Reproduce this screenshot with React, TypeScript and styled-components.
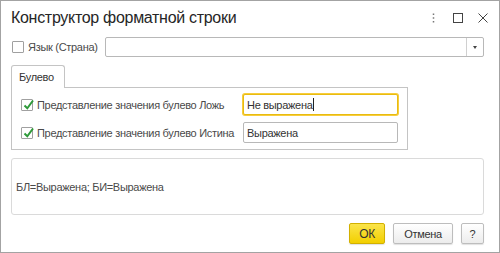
import React from 'react';
import styled, { createGlobalStyle } from 'styled-components';

const GlobalStyle = createGlobalStyle`
    html, body {
        margin: 0;
        padding: 0;
        background: #fff;
    }
    * {
        box-sizing: border-box;
    }
`;

const Window = styled.div`
    width: 500px;
    height: 253px;
    border: 1px solid #a3a3a3;
    background: #fff;
    display: flex;
    flex-direction: column;
    font-family: "Liberation Sans", Arial, sans-serif;
    font-size: 11px;
    letter-spacing: -0.3px;
    color: #4a4a4a;
`;

const Header = styled.div`
    height: 34px;
    display: flex;
    align-items: center;
    padding: 0 10px 0 10px;
`;

const Title = styled.h1`
    flex: 1;
    margin: 0;
    font-size: 16px;
    font-weight: 400;
    letter-spacing: -0.3px;
    color: #262626;
`;

const HeaderButtons = styled.div`
    display: flex;
    align-items: center;
    gap: 13px;
`;

const IconButton = styled.button`
    width: 12px;
    height: 12px;
    padding: 0;
    border: none;
    background: none;
    display: flex;
    align-items: center;
    justify-content: center;
`;

const Body = styled.div`
    flex: 1;
    display: flex;
    flex-direction: column;
    padding: 2px 15px 0 10px;
`;

const LangRow = styled.div`
    display: flex;
    align-items: center;
    height: 20px;
`;

const Check = styled.span<{ $checked?: boolean }>`
    position: relative;
    flex: none;
    width: 12px;
    height: 12px;
    border: 1px solid #a0a0a0;
    border-radius: 1px;
    background: #fff;
    margin-left: ${p => (p.$checked ? 0 : 1)}px;
`;

const CheckMark = styled.svg`
    position: absolute;
    left: 1px;
    top: -1px;
`;

const Label = styled.span`
    white-space: nowrap;
`;

const LangLabel = styled(Label)`
    margin-left: 4px;
    width: 77px;
`;

const Field = styled.div<{ $focused?: boolean }>`
    position: relative;
    height: 21px;
    border: 1px solid ${p => (p.$focused ? '#e8bc10' : '#b8b8b8')};
    border-radius: 2px;
    background: #fff;
    display: flex;
    align-items: center;
    padding: 0 3px;
    color: #333;
    box-shadow: ${p => (p.$focused ? '0 0 0 1px #f8cd3c' : 'none')};
`;

const LangField = styled(Field)`
    flex: 1;
    height: 20px;
    padding: 0;
    justify-content: flex-end;
`;

const DropButton = styled.div`
    width: 17px;
    height: 100%;
    border-left: 1px solid #d0d0d0;
    display: flex;
    align-items: center;
    justify-content: center;
`;

const Arrow = styled.span`
    width: 0;
    height: 0;
    border-left: 2.5px solid transparent;
    border-right: 2.5px solid transparent;
    border-top: 3px solid #444;
`;

const Caret = styled.span`
    width: 1px;
    height: 13px;
    background: #222;
    margin-left: 1px;
`;

const Tabs = styled.div`
    margin-top: 8px;
    display: flex;
    flex-direction: column;
    width: 397px;
`;

const Tab = styled.div`
    width: 54px;
    height: 23px;
    margin-bottom: -1px;
    border: 1px solid #c4c4c4;
    border-bottom: none;
    border-radius: 3px 3px 0 0;
    background: #fff;
    display: flex;
    align-items: center;
    padding-left: 7px;
    color: #333;
    position: relative;
    z-index: 1;
`;

const Panel = styled.div`
    height: 63px;
    border: 1px solid #c4c4c4;
    display: grid;
    grid-template-columns: 12px 202px 155px;
    column-gap: 4px;
    row-gap: 7px;
    align-items: center;
    align-content: start;
    padding: 6px 8px 0 9px;
`;

const Summary = styled.div`
    margin-top: 8px;
    height: 57px;
    border: 1px solid #dadada;
    border-radius: 3px;
    display: flex;
    align-items: center;
    padding-left: 4px;
    color: #4a4a4a;
`;

const Footer = styled.div`
    margin-top: 8px;
    display: flex;
    justify-content: flex-end;
    gap: 8px;
`;

const Button = styled.button<{ $primary?: boolean; $w: number }>`
    width: ${p => p.$w}px;
    height: 21px;
    padding: 0;
    border: 1px solid ${p => (p.$primary ? '#d2b000' : '#bdbdbd')};
    border-radius: 2px;
    background: ${p => (p.$primary ? 'linear-gradient(#fbe44a, #f2cf00)' : 'linear-gradient(#ffffff, #ececec)')};
    font-family: "Liberation Sans", Arial, sans-serif;
    font-size: ${p => (p.$primary ? 12 : 11)}px;
    letter-spacing: -0.3px;
    color: #333;
    box-shadow: 0 1px 1px rgba(0, 0, 0, 0.12);
`;

const CheckBox: React.FC<{ checked?: boolean }> = ({ checked }) => (
    <Check $checked={checked}>
        {checked && (
            <CheckMark width="12" height="12" viewBox="0 0 12 12">
                <path d="M1.5 6.5 L4.3 9.3 L10 1.5" fill="none" stroke="#2f9a3a" strokeWidth="2" />
            </CheckMark>
        )}
    </Check>
);

const App: React.FC = () => {
    return (
        <>
            <GlobalStyle />
            <Window>
                <Header>
                    <Title>Конструктор форматной строки</Title>
                    <HeaderButtons>
                        <IconButton>
                            <svg width="3" height="10" viewBox="0 0 3 10">
                                <rect x="0.75" y="0.5" width="1.5" height="1.5" fill="#777" />
                                <rect x="0.75" y="4.25" width="1.5" height="1.5" fill="#777" />
                                <rect x="0.75" y="8" width="1.5" height="1.5" fill="#777" />
                            </svg>
                        </IconButton>
                        <IconButton>
                            <svg width="10" height="10" viewBox="0 0 10 10">
                                <rect x="0.5" y="0.5" width="9" height="9" fill="none" stroke="#444" />
                            </svg>
                        </IconButton>
                        <IconButton>
                            <svg width="10" height="10" viewBox="0 0 10 10">
                                <path d="M0.5 0.5 L9.5 9.5 M9.5 0.5 L0.5 9.5" stroke="#444" strokeWidth="1" />
                            </svg>
                        </IconButton>
                    </HeaderButtons>
                </Header>
                <Body>
                    <LangRow>
                        <CheckBox />
                        <LangLabel>Язык (Страна)</LangLabel>
                        <LangField>
                            <DropButton>
                                <Arrow />
                            </DropButton>
                        </LangField>
                    </LangRow>
                    <Tabs>
                        <Tab>Булево</Tab>
                        <Panel>
                            <CheckBox checked />
                            <Label>Представление значения булево Ложь</Label>
                            <Field $focused>
                                Не выражена<Caret />
                            </Field>
                            <CheckBox checked />
                            <Label>Представление значения булево Истина</Label>
                            <Field>Выражена</Field>
                        </Panel>
                    </Tabs>
                    <Summary>БЛ=Выражена; БИ=Выражена</Summary>
                    <Footer>
                        <Button $primary $w={36}>ОК</Button>
                        <Button $w={60}>Отмена</Button>
                        <Button $w={23}>?</Button>
                    </Footer>
                </Body>
            </Window>
        </>
    );
};

export default App;
